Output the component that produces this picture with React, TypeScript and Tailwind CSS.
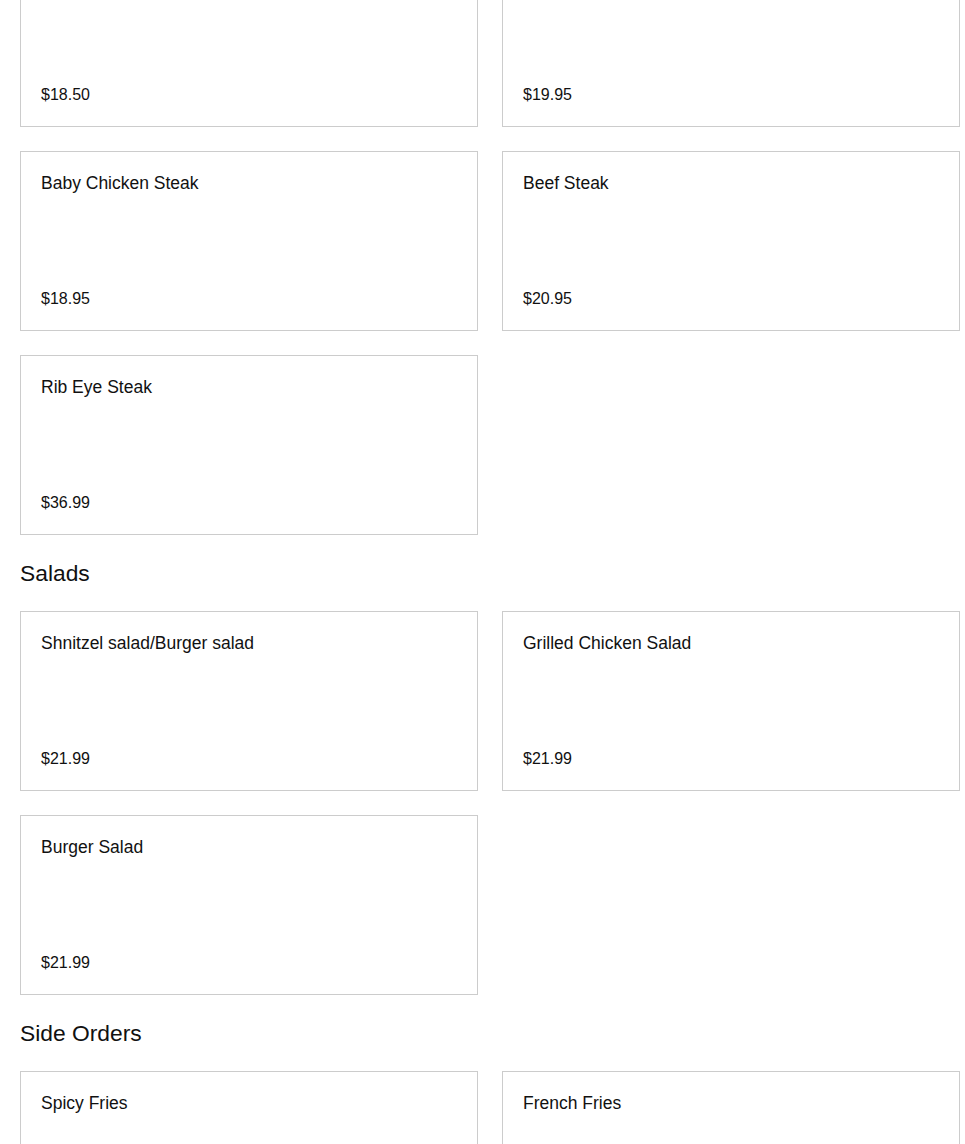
import React from "react";

type Item = { name: string; price: string };

const Card = ({ item }: { item: Item }) => (
  <div className="flex h-[180px] flex-col justify-between border border-[#cccccc] bg-white px-5 pt-[19px] pb-[20px]">
    <div className="text-[17.5px] leading-[24px] text-[#111111]">{item.name}</div>
    <div className="text-[16px] leading-[22px] text-[#111111]">{item.price}</div>
  </div>
);

const Grid = ({ items }: { items: Item[] }) => (
  <div className="grid grid-cols-2 gap-6">
    {items.map((it, i) => (
      <Card key={i} item={it} />
    ))}
  </div>
);

const Heading = ({ children }: { children: React.ReactNode }) => (
  <h2 className="pt-[24px] pb-[24px] text-[22.8px] leading-[28px] text-[#111111]">{children}</h2>
);

export default function App() {
  return (
    <div
      className="min-h-[1144px] overflow-hidden bg-white"
      style={{ fontFamily: '"Liberation Sans", Arial, sans-serif' }}
    >
      <div className="ml-5 mt-[-53px] w-[940px]">
        <Grid
          items={[
            { name: "", price: "$18.50" },
            { name: "", price: "$19.95" },
            { name: "Baby Chicken Steak", price: "$18.95" },
            { name: "Beef Steak", price: "$20.95" },
            { name: "Rib Eye Steak", price: "$36.99" },
          ]}
        />
        <Heading>Salads</Heading>
        <Grid
          items={[
            { name: "Shnitzel salad/Burger salad", price: "$21.99" },
            { name: "Grilled Chicken Salad", price: "$21.99" },
            { name: "Burger Salad", price: "$21.99" },
          ]}
        />
        <Heading>Side Orders</Heading>
        <Grid
          items={[
            { name: "Spicy Fries", price: "" },
            { name: "French Fries", price: "" },
          ]}
        />
      </div>
    </div>
  );
}
